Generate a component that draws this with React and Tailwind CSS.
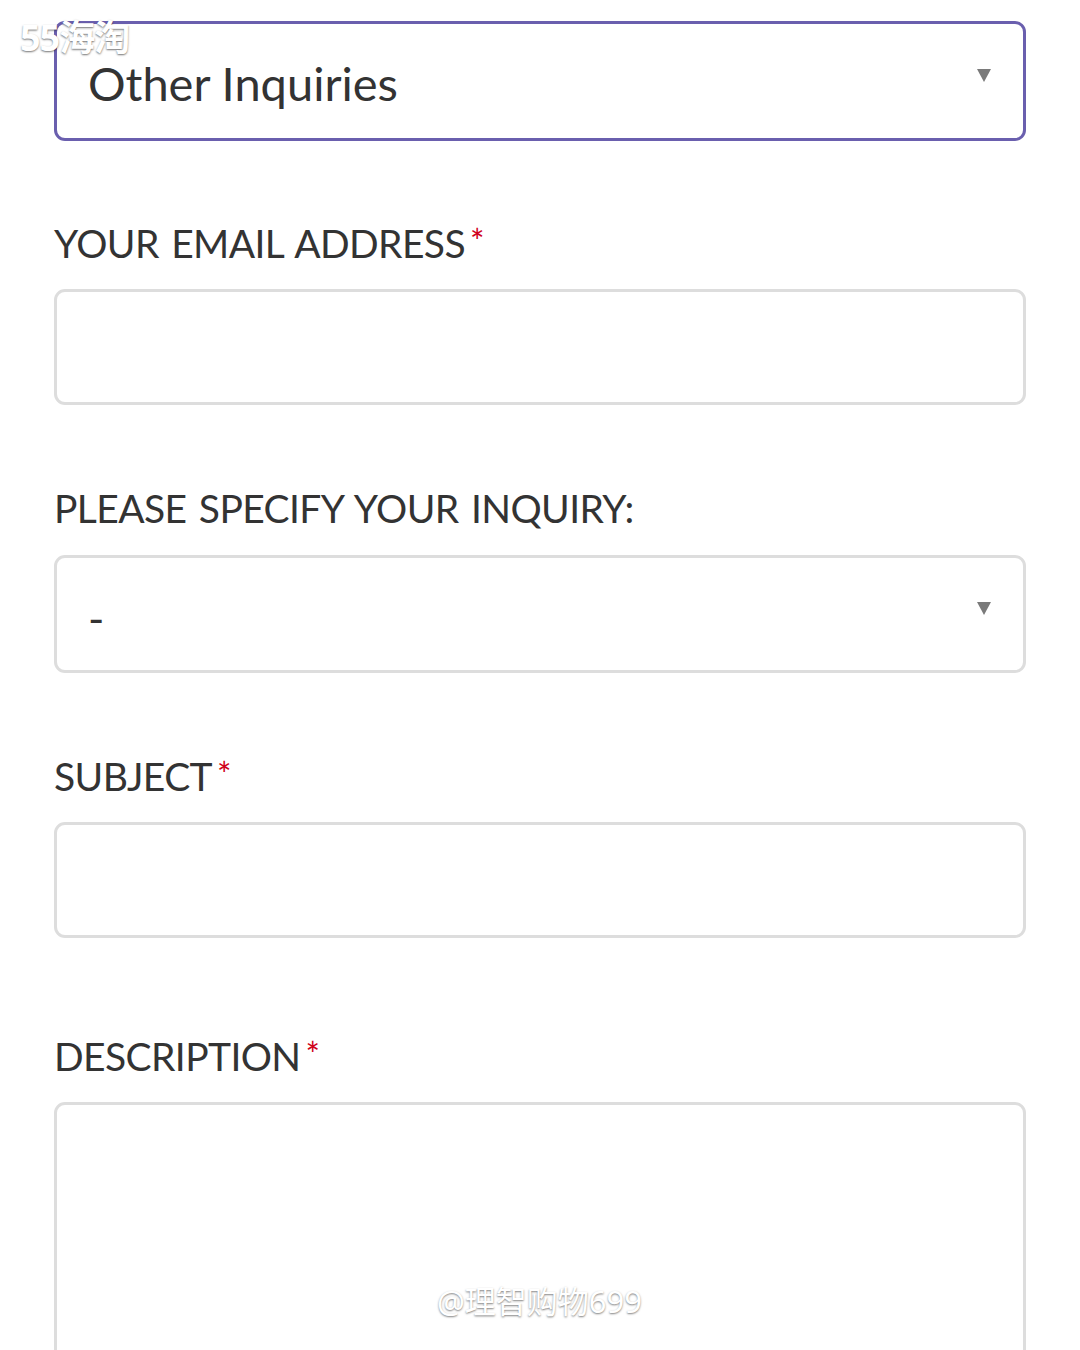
import React from "react";

const font = { fontFamily: '"Lato", "Noto Sans", sans-serif' };

function Label({ text, required, mt }) {
  return (
    <div className={`flex h-[60px] items-center ${mt}`}>
      <span className="text-[39px] font-normal leading-none tracking-[-0.6px] [word-spacing:3px] text-[#333333]">{text}</span>
      {required && (
        <span className="ml-[5px] -mt-[4px] text-[34px] leading-none text-[#d0021b]">*</span>
      )}
    </div>
  );
}

function Caret() {
  return (
    <svg width="14" height="13" viewBox="0 0 14 13" className="shrink-0">
      <polygon points="0,0 14,0 7,13" fill="#7a7a7a" />
    </svg>
  );
}

export default function App() {
  return (
    <div className="relative min-h-[1350px] w-[1080px] overflow-hidden bg-white" style={font}>
      <div className="flex flex-col px-[54px]">
        <div className="mt-[21px] flex h-[120px] items-start justify-between rounded-[11px] border-[3px] border-[#6a5fae] pl-[31px] pr-[32px]">
          <span className="mt-[36px] text-[47px] font-normal leading-none text-[#333333]">Other Inquiries</span>
          <div className="mt-[45px]"><Caret /></div>
        </div>

        <Label text="YOUR EMAIL ADDRESS" required mt="mt-[72px]" />
        <div className="mt-[16px] h-[116px] rounded-[11px] border-[3px] border-[#dddddd]" />

        <Label text="PLEASE SPECIFY YOUR INQUIRY:" mt="mt-[73px]" />
        <div className="mt-[17px] flex h-[118px] items-start justify-between rounded-[11px] border-[3px] border-[#dddddd] pl-[31px] pr-[32px]">
          <span className="mt-[38px] text-[44px] leading-none text-[#333333]">-</span>
          <div className="mt-[44px]"><Caret /></div>
        </div>

        <Label text="SUBJECT" required mt="mt-[73px]" />
        <div className="mt-[16px] h-[116px] rounded-[11px] border-[3px] border-[#dddddd]" />

        <Label text="DESCRIPTION" required mt="mt-[88px]" />
        <div className="mt-[16px] h-[320px] rounded-[11px] border-[3px] border-[#dddddd]" />
      </div>

      <div
        className="absolute left-[20px] top-[20px] text-[36px] font-bold leading-none tracking-[-1px] text-white"
        style={{ fontFamily: '"Noto Sans", "Noto Sans CJK SC", sans-serif', textShadow: "0 1px 2px rgba(0,0,0,0.55)" }}
      >
        55海淘
      </div>
      <div
        className="absolute left-[437px] top-[1286px] text-[31px] leading-none text-white"
        style={{ fontFamily: '"Noto Sans", "Noto Sans CJK SC", sans-serif', textShadow: "0 1px 2px rgba(0,0,0,0.5)" }}
      >
        @理智购物699
      </div>
    </div>
  );
}
